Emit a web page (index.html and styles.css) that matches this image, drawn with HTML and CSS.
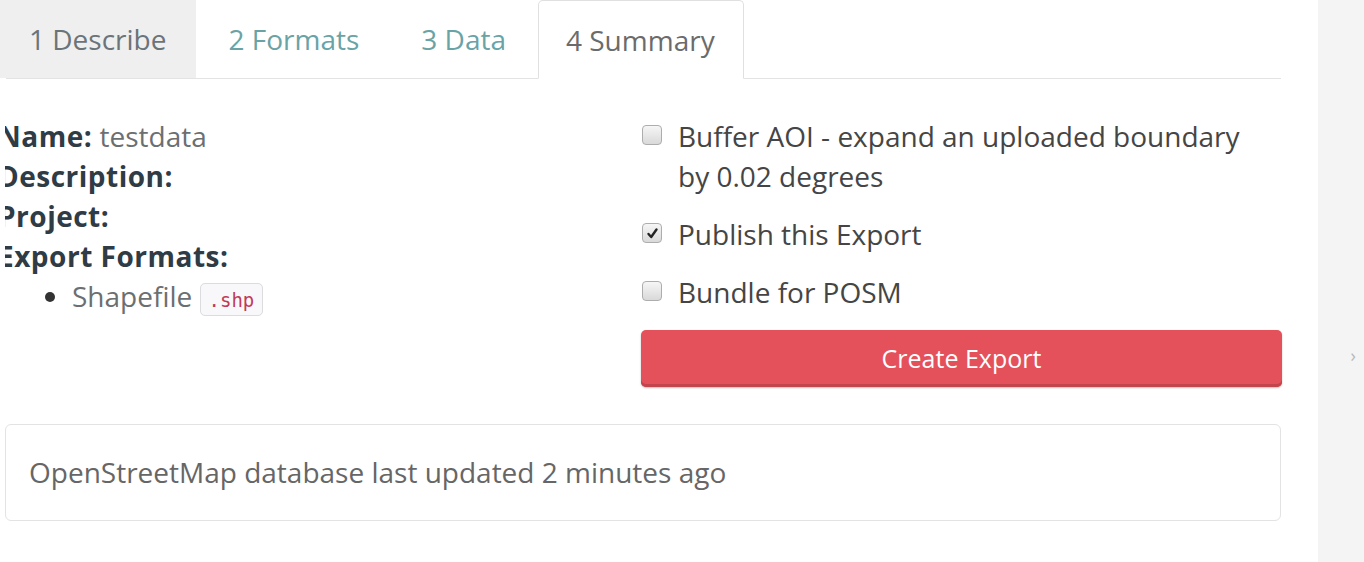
FILE: index.html
```html
<!DOCTYPE html>
<html>
<head>
<meta charset="utf-8">
<link rel="stylesheet" href="styles.css">
</head>
<body>
<div class="page">
  <div class="main">
    <ul class="tabs">
      <li class="tab tab-first">1 Describe</li>
      <li class="tab tab-link">2 Formats</li>
      <li class="tab tab-link">3 Data</li>
      <li class="tab tab-active">4 Summary</li>
    </ul>
    <div class="cols">
      <div class="col-left">
        <div class="col-left-inner">
          <div class="line"><b>Name:</b> <span class="val">testdata</span></div>
          <div class="line"><b>Description:</b></div>
          <div class="line"><b>Project:</b></div>
          <div class="line"><b>Export Formats:</b></div>
          <ul class="formats">
            <li><span class="val">Shapefile</span> <code class="code">.shp</code></li>
          </ul>
        </div>
      </div>
      <div class="col-right">
        <label class="check">
          <span class="box"></span>
          <span class="label-text">Buffer AOI - expand an uploaded boundary by 0.02 degrees</span>
        </label>
        <label class="check">
          <span class="box"><svg width="13" height="13" viewBox="0 0 13 13"><path d="M2.5 7 L5.2 10 L10.5 2.5" fill="none" stroke="#222" stroke-width="2.4" stroke-linecap="round" stroke-linejoin="round"/></svg></span>
          <span class="label-text">Publish this Export</span>
        </label>
        <label class="check">
          <span class="box"></span>
          <span class="label-text">Bundle for POSM</span>
        </label>
        <button class="btn">Create Export</button>
      </div>
    </div>
    <div class="panel">OpenStreetMap database last updated 2 minutes ago</div>
  </div>
  <div class="strip"><span class="strip-mark">›</span></div>
</div>
</body>
</html>
```
FILE: styles.css
```css
html, body {
  margin: 0;
  padding: 0;
  background: #fff;
  overflow: hidden;
}
body {
  font-family: "Open Sans", "Liberation Sans", sans-serif;
  font-size: 28px;
  line-height: 40px;
  color: #444;
}
.page {
  display: flex;
  height: 562px;
}
.main {
  width: 1318px;
  flex: none;
}
.strip {
  flex: 1;
  background: #f4f4f4;
  display: flex;
  justify-content: flex-end;
  padding-top: 340px;
}
.strip-mark {
  color: #b8b8b8;
  font-size: 18px;
  line-height: 30px;
  padding-right: 8px;
}
.tabs {
  list-style: none;
  margin: 0 0 0 6px;
  padding: 0;
  width: 1275px;
  display: flex;
  gap: 2px;
  border-bottom: 1px solid #e3e3e3;
  height: 78px;
}
.tab {
  height: 78px;
  line-height: 78px;
  padding: 0 30px;
  box-sizing: border-box;
  color: #6a6a6a;
}
.tab-first {
  margin-left: -7px;
  background: #efefef;
  color: #6b7478;
}
.tab-link {
  color: #6aa3a6;
}
.tab-active {
  background: #fff;
  border: 1px solid #e0e0e0;
  border-bottom-color: #fff;
  border-radius: 5px 5px 0 0;
  height: 79px;
  line-height: 78px;
  margin-bottom: -1px;
  padding: 0 28px 0 27px;
  color: #6b6b6b;
}
.cols {
  display: grid;
  grid-template-columns: 636px 641px;
  margin-left: 5px;
  padding-top: 37px;
}
.col-left {
  overflow: hidden;
}
.col-left-inner {
  margin-left: -7px;
}
.line b {
  color: #2f3b45;
  font-weight: 700;
  letter-spacing: 0.5px;
}
.val {
  color: #6b6f72;
}
.formats {
  margin: 0;
  padding-left: 74px;
  color: #333;
}
.code {
  font-family: "DejaVu Sans Mono", "Liberation Mono", monospace;
  font-size: 19px;
  color: #c23a5b;
  background: #f8f8fa;
  border: 1px solid #dcdce0;
  border-radius: 5px;
  padding: 5px 8px 4px;
}
.col-right {
  display: flex;
  flex-direction: column;
}
.check {
  display: flex;
  gap: 16px;
  margin-bottom: 18px;
  color: #454545;
}
.label-text {
  padding-right: 24px;
}
.box {
  flex: none;
  width: 18px;
  height: 18px;
  margin-top: 9px;
  margin-left: 1px;
  border: 1px solid #adadad;
  border-radius: 4px;
  background: linear-gradient(#f6f6f6, #d9d9d9);
  display: flex;
  align-items: center;
  justify-content: center;
}
.btn {
  margin-top: 0;
  height: 57px;
  border: none;
  border-radius: 5px;
  background: #e5515a;
  color: #fff;
  font-family: "Open Sans", "Liberation Sans", sans-serif;
  font-size: 25px;
  box-shadow: inset 0 -3px 0 #c2444c, 0 1px 2px rgba(0,0,0,0.25);
  padding: 0 0 2px 0;
}
.panel {
  margin: 37px 0 0 5px;
  width: 1276px;
  box-sizing: border-box;
  border: 1px solid #e3e3e3;
  border-radius: 6px;
  padding: 27px 23px 28px;
  color: #666;
}
```
